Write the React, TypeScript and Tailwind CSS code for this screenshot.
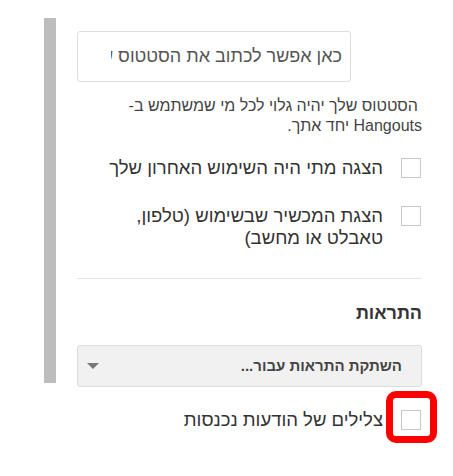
import React from "react";

function Box({ children }: { children?: React.ReactNode }) {
  return (
    <span className="relative block w-[20px] h-[20px] shrink-0 border border-[#c8c8c8] bg-white">
      {children}
    </span>
  );
}

function CheckRow({
  label,
  className,
  highlight,
}: {
  label: React.ReactNode;
  className?: string;
  highlight?: boolean;
}) {
  return (
    <label className={`flex items-start gap-[18px] pr-px ${className ?? ""}`}>
      <Box>
        {highlight && (
          <span className="absolute -left-[16px] -top-[20px] w-[51px] h-[52px] rounded-[10px] border-[7px] border-[#ff0000]" />
        )}
      </Box>
      <span className="text-[18.5px] leading-[22px] text-[#333] -mt-px">{label}</span>
    </label>
  );
}

export default function App() {
  return (
    <div
      className="w-[453px] h-[476px] bg-white flex pt-[18px]"
      style={{ fontFamily: '"Liberation Sans", Arial, sans-serif' }}
    >
      <div className="ml-[44px] w-[12px] h-[365px] bg-[#bdbdbd]" />

      <div dir="rtl" className="ml-[21px] w-[345px] flex flex-col pt-[13px]">
        <input
          type="text"
          placeholder="כאן אפשר לכתוב את הסטטוס שלך"
          className="self-end w-[274px] h-[51px] rounded-[3px] border border-[#dedede] bg-white pr-[8px] pl-[33px] text-[18px] text-[#444] placeholder:text-[#555] outline-none"
        />

        <p className="mt-[14px] text-[16px] leading-[20px] text-[#444]">
          <span className="block pr-[4px]">הסטטוס שלך יהיה גלוי לכל מי שמשתמש ב-</span>
          <span className="block">Hangouts יחד אתך.</span>
        </p>

        <CheckRow className="mt-[22px]" label="הצגה מתי היה השימוש האחרון שלך" />
        <CheckRow
          className="mt-[27px]"
          label={
            <>
              הצגת המכשיר שבשימוש (טלפון,
              <br />
              טאבלט או מחשב)
            </>
          }
        />

        <div className="mt-[29px] h-px bg-[#e5e5e5]" />

        <h3 className="mt-[23px] text-[18px] leading-[22px] font-bold text-[#333]">התראות</h3>

        <button
          type="button"
          className="mt-[21px] h-[42px] flex items-center justify-between rounded-[3px] border border-[#dcdcdc] bg-[#f1f1f1] pr-[19px] pl-[9px]"
        >
          <span className="text-[15px] font-bold text-[#444]">השתקת התראות עבור...</span>
          <svg width="12" height="6" viewBox="0 0 12 6">
            <path d="M0 0h12L6 6z" fill="#777" />
          </svg>
        </button>

        <CheckRow className="mt-[23px]" highlight label="צלילים של הודעות נכנסות" />
      </div>
    </div>
  );
}
